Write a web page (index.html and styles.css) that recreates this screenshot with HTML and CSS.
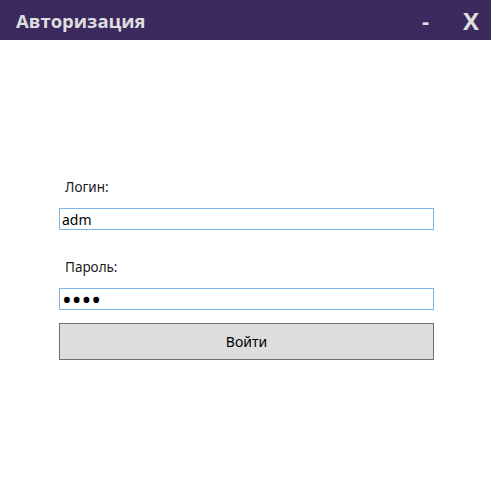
FILE: index.html
```html
<!DOCTYPE html>
<html lang="ru">
<head>
<meta charset="utf-8">
<title>Авторизация</title>
<link rel="stylesheet" href="styles.css">
</head>
<body>
<header class="titlebar">
  <span class="title">Авторизация</span>
  <div class="controls">
    <span class="ctl min">-</span>
    <span class="ctl close">X</span>
  </div>
</header>
<main class="form">
  <label class="label" for="login">Логин:</label>
  <input class="field" id="login" type="text" value="adm">
  <label class="label second" for="pass">Пароль:</label>
  <input class="field pass" id="pass" type="password" value="1234">
  <button class="btn" type="button">Войти</button>
</main>
</body>
</html>
```
FILE: styles.css
```css
html, body {
  margin: 0;
  padding: 0;
  background: #ffffff;
}
body {
  font-family: "Noto Sans", "Open Sans", sans-serif;
  color: #000;
}
.titlebar {
  height: 40px;
  background: #3c2a5f;
  display: flex;
  align-items: center;
  justify-content: space-between;
  padding: 0 12px 0 16px;
}
.title {
  font-family: "Open Sans", "Noto Sans", sans-serif;
  font-weight: 700;
  font-size: 18.5px;
  color: #dedede;
  letter-spacing: 0;
}
.controls {
  display: flex;
  align-items: center;
  gap: 34px;
}
.ctl {
  font-family: "Open Sans", "Noto Sans", sans-serif;
  font-weight: 700;
  color: #dedede;
}
.min {
  font-size: 22px;
}
.close {
  font-size: 24px;
}
.form {
  display: flex;
  flex-direction: column;
  width: 375px;
  margin: 138px 0 0 59px;
}
.label {
  font-size: 13.5px;
  line-height: 19px;
  padding-left: 6px;
  margin-bottom: 11px;
  color: #1a1a1a;
}
.label.second {
  margin-top: 28px;
}
.field {
  box-sizing: border-box;
  height: 22px;
  margin: 0;
  border: 1px solid #7eb4ea;
  padding: 0 2px;
  font-family: "Noto Sans", sans-serif;
  font-size: 14px;
  color: #000;
  outline: none;
  background: #fff;
}
.pass {
  font-size: 26px;
  letter-spacing: 0;
  line-height: 20px;
}
.btn {
  box-sizing: border-box;
  margin-top: 13px;
  height: 37px;
  border: 1px solid #707070;
  background: #dddddd;
  font-family: "Noto Sans", sans-serif;
  font-size: 14px;
  color: #000;
  padding: 0;
}
```
